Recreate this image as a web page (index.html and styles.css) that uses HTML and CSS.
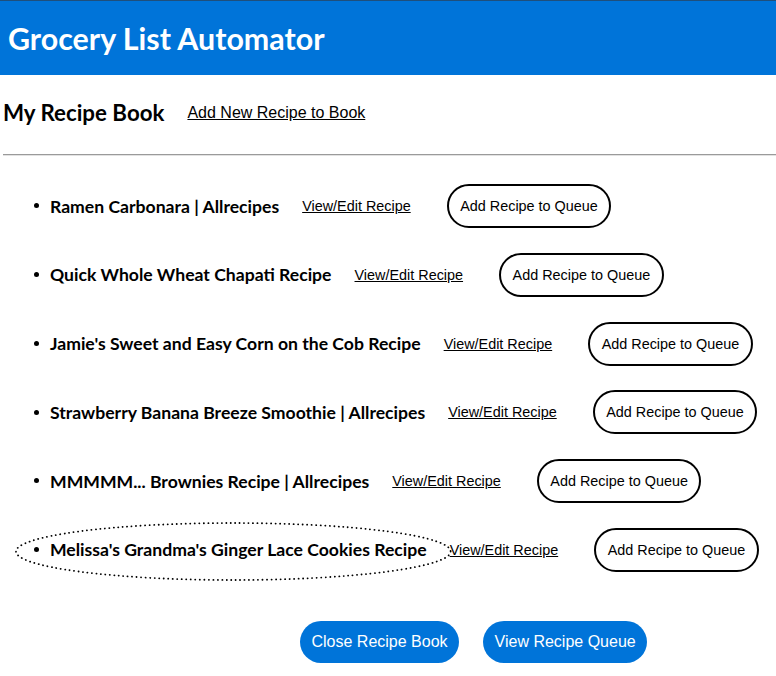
FILE: index.html
```html
<!DOCTYPE html>
<html>
<head>
<meta charset="utf-8">
<title>Grocery List Automator</title>
<link rel="stylesheet" href="styles.css">
</head>
<body>
<header class="topbar">
  <h1 class="app-title">Grocery List Automator</h1>
</header>
<main class="book">
  <div class="book-head">
    <h2 class="book-title">My Recipe Book</h2>
    <a class="link big" href="#">Add New Recipe to Book</a>
  </div>
  <hr class="rule">
  <ul class="recipes">
    <li class="recipe"><span class="name">Ramen Carbonara | Allrecipes</span><a class="link" href="#">View/Edit Recipe</a><button class="queue-btn">Add Recipe to Queue</button></li>
    <li class="recipe"><span class="name">Quick Whole Wheat Chapati Recipe</span><a class="link" href="#">View/Edit Recipe</a><button class="queue-btn">Add Recipe to Queue</button></li>
    <li class="recipe"><span class="name">Jamie's Sweet and Easy Corn on the Cob Recipe</span><a class="link" href="#">View/Edit Recipe</a><button class="queue-btn">Add Recipe to Queue</button></li>
    <li class="recipe"><span class="name">Strawberry Banana Breeze Smoothie | Allrecipes</span><a class="link" href="#">View/Edit Recipe</a><button class="queue-btn">Add Recipe to Queue</button></li>
    <li class="recipe"><span class="name">MMMMM... Brownies Recipe | Allrecipes</span><a class="link" href="#">View/Edit Recipe</a><button class="queue-btn">Add Recipe to Queue</button></li>
    <li class="recipe focused"><span class="name">Melissa's Grandma's Ginger Lace Cookies Recipe<svg class="focus-ring" viewBox="0 0 437 59" preserveAspectRatio="none" aria-hidden="true"><ellipse cx="218.5" cy="29.5" rx="217.5" ry="28.5" fill="none" stroke="#000" stroke-width="1.8" stroke-dasharray="0.1 4.4" stroke-linecap="round"/></svg></span><a class="link" href="#">View/Edit Recipe</a><button class="queue-btn">Add Recipe to Queue</button></li>
  </ul>
  <div class="actions">
    <button class="primary-btn">Close Recipe Book</button>
    <button class="primary-btn">View Recipe Queue</button>
  </div>
</main>
</body>
</html>
```

FILE: styles.css
```css
html, body {
  margin: 0;
  padding: 0;
  background: #ffffff;
}
body {
  font-family: "Liberation Sans", Arial, sans-serif;
  color: #000;
}
.topbar {
  background: #0074d9;
  border-top: 1px solid #1f4f7c;
  height: 74px;
  display: flex;
  align-items: center;
  padding-left: 8px;
}
.app-title {
  margin: 0;
  font-family: Lato, "Noto Sans", sans-serif;
  font-weight: 700;
  font-size: 30.4px;
  color: #ffffff;
  line-height: 1;
}
.book {
  padding: 0 0 0 3px;
}
.book-head {
  box-sizing: border-box;
  display: flex;
  align-items: center;
  gap: 23px;
  height: 79px;
  padding-bottom: 5px;
}
.book-title {
  margin: 0;
  font-family: Lato, "Noto Sans", sans-serif;
  font-weight: 700;
  font-size: 22.3px;
}
.link {
  color: #000;
  text-decoration: underline;
  font-family: "Liberation Sans", Arial, sans-serif;
  font-size: 14.4px;
}
.link.big {
  font-size: 16px;
  margin-top: 2px;
}
.rule {
  margin: 0;
  border: 0;
  border-top: 1px solid #9a9a9a;
  border-bottom: 1px solid #e2e2e2;
  height: 0;
}
.recipes {
  margin: 28px 0 0 0;
  padding: 0 0 0 47px;
  display: flex;
  flex-direction: column;
  gap: 24.8px;
}
.recipe {
  list-style: disc;
  display: list-item;
}
.recipe > * {
  vertical-align: middle;
}
.name {
  font-family: Lato, "Noto Sans", sans-serif;
  font-weight: 700;
  font-size: 17.6px;
  margin-right: 23px;
  position: relative;
}
.queue-btn {
  margin-left: 36px;
  font-family: "Liberation Sans", Arial, sans-serif;
  font-size: 14.4px;
  color: #000;
  background: #fff;
  border: 2px solid #000;
  border-radius: 24px;
  padding: 12px 11.5px;
  line-height: normal;
}
.focus-ring {
  position: absolute;
  left: -35px;
  top: 50%;
  width: calc(100% + 60px);
  height: 59px;
  margin-top: -28px;
  overflow: visible;
  pointer-events: none;
}
.actions {
  display: flex;
  gap: 24px;
  margin: 49px 0 0 297px;
}
.primary-btn {
  background: #0074d9;
  color: #fff;
  border: 0;
  border-radius: 21px;
  font-family: "Liberation Sans", Arial, sans-serif;
  font-size: 16px;
  padding: 12px 11.5px;
  line-height: normal;
}
```
